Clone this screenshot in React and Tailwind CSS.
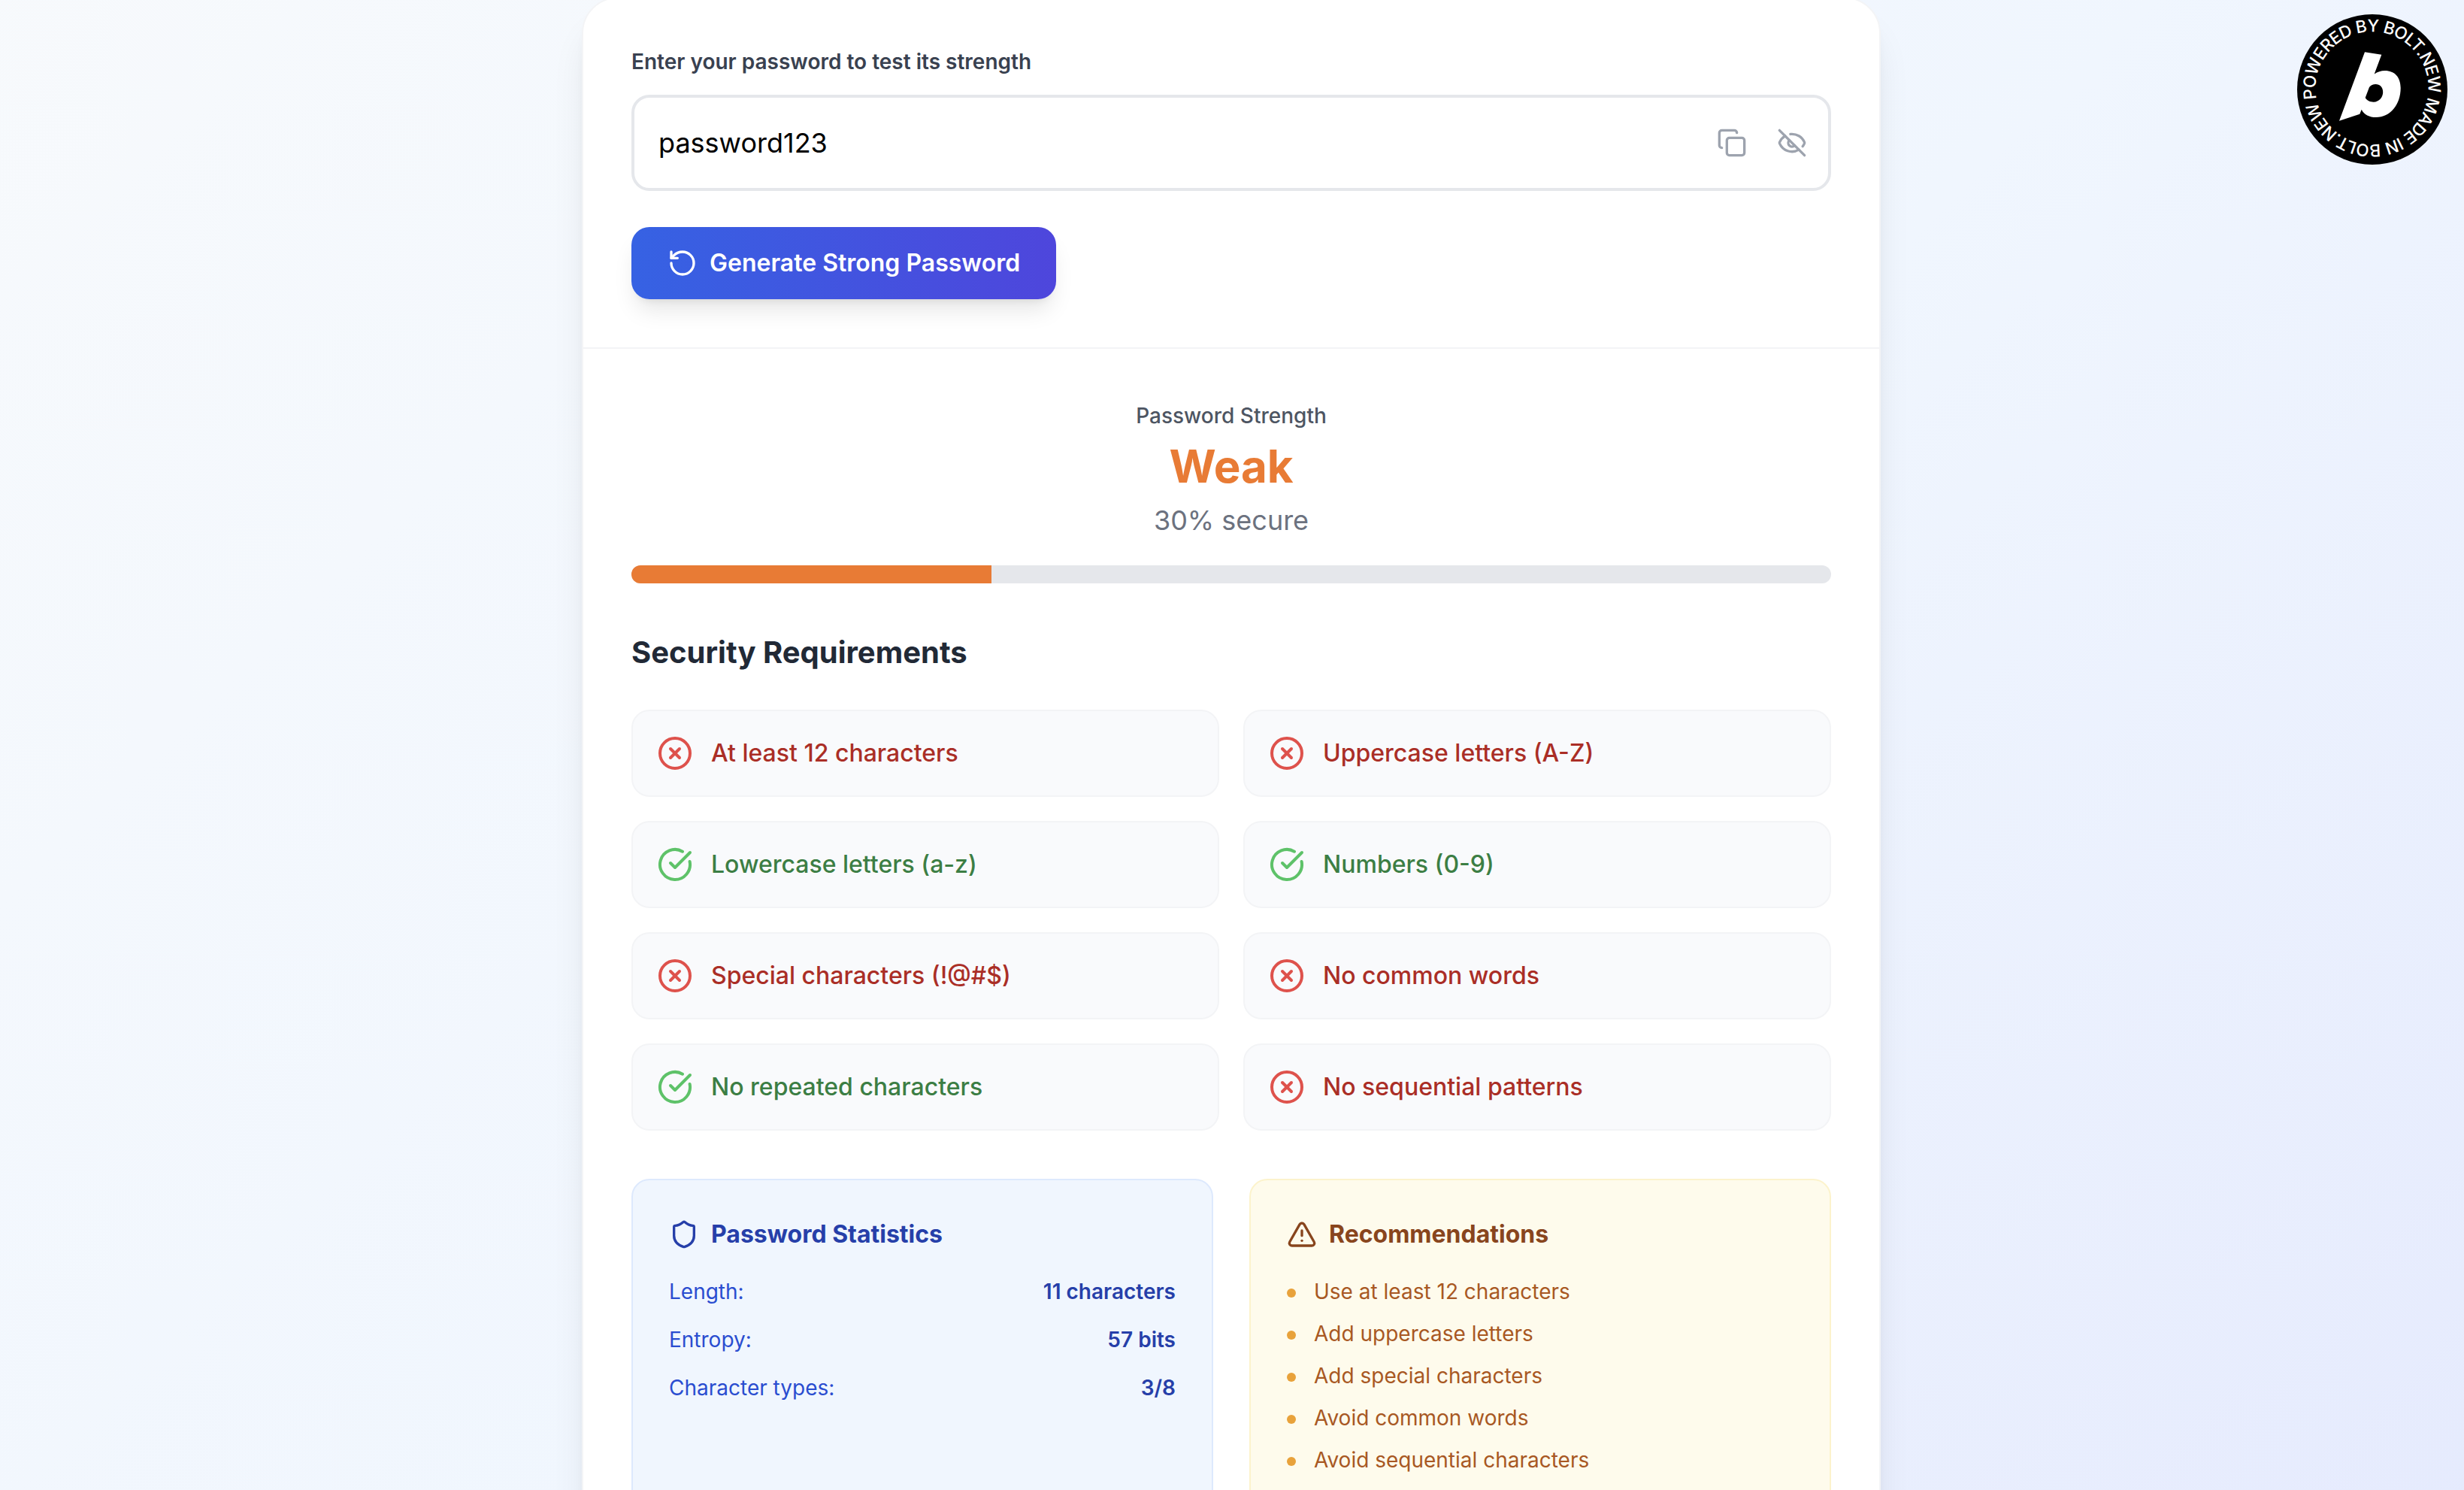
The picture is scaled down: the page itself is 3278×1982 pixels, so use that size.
import { AlertTriangle, CheckCircle, Copy, EyeOff, RotateCcw, Shield, XCircle } from 'lucide-react'

const requirements = [
  { label: 'At least 12 characters', met: false },
  { label: 'Uppercase letters (A-Z)', met: false },
  { label: 'Lowercase letters (a-z)', met: true },
  { label: 'Numbers (0-9)', met: true },
  { label: 'Special characters (!@#$)', met: false },
  { label: 'No common words', met: false },
  { label: 'No repeated characters', met: true },
  { label: 'No sequential patterns', met: false },
]

const stats = [
  { label: 'Length:', value: '11 characters' },
  { label: 'Entropy:', value: '57 bits' },
  { label: 'Character types:', value: '3/8' },
]

const recommendations = [
  'Use at least 12 characters',
  'Add uppercase letters',
  'Add special characters',
  'Avoid common words',
  'Avoid sequential characters',
]

function BoltBadge() {
  return (
    <svg viewBox="0 0 200 200" className="absolute top-[19px] right-[22px] size-[200px]">
      <circle cx="100" cy="100" r="100" fill="#000" />
      <path id="badge-ring" d="M25.900 112.400 A75 75 0 1 1 26.100 113.400" fill="none" />
      <text fill="#fff" fontSize="22.5" fontWeight="500" fontFamily="Inter, sans-serif">
        <textPath href="#badge-ring" textLength="467" lengthAdjust="spacing">
          POWERED BY BOLT.NEW MADE IN BOLT.NEW
        </textPath>
      </text>
      <path
        fill="#fff"
        fillRule="evenodd"
        d="M90 50.3 L112.3 53.7 L102.7 79.5 C107 76.5 111.5 75 116.7 75 C130 75 137.7 84 137.7 98 C137.7 120 124 137 105 137 C96 137 89 133.5 85.7 126.7 L83.3 132.7 L56 141.7 Z M90.7 111 C93 115 97 116.7 101.7 116.7 C109 116.7 114.2 110.5 114.2 103.5 C114.2 97 110 93 104.5 93 C101 93 98 94.5 96 97 Z"
      />
    </svg>
  )
}

function Requirement({ label, met }) {
  return (
    <div className="flex items-center gap-6 rounded-3xl border-2 border-[#f3f4f6] bg-[#f9fafc] p-8">
      {met ? (
        <CheckCircle className="size-12 text-[#5ec269]" />
      ) : (
        <XCircle className="size-12 text-[#de524c]" />
      )}
      <span className={met ? 'font-medium text-[#3c7e44]' : 'font-medium text-[#aa2e26]'}>
        {label}
      </span>
    </div>
  )
}

export default function App() {
  const score = 30

  return (
    <div className="relative h-[1982px] overflow-hidden bg-[linear-gradient(to_bottom_right,#f8fafc,#f0f6fe,#e2e7fd)] bg-[length:3278px_3200px] bg-[position:0_-400px] font-['Inter',sans-serif] text-[32px] leading-[48px]">
      <div className="w-[3276px]">
        <main className="mx-auto -mt-1 w-[1728px] rounded-[48px] border-2 border-[#f3f4f6] bg-white shadow-[0_40px_50px_-10px_rgba(0,0,0,0.1),0_16px_20px_-12px_rgba(0,0,0,0.1)]">
          <section className="border-b-2 border-[#f3f4f6] p-16">
            <label className="mb-6 block text-[28px] leading-10 font-semibold text-[#394150]">
              Enter your password to test its strength
            </label>
            <div className="flex h-32 items-center justify-between rounded-3xl border-4 border-[#e5e7eb] pr-7 pl-8">
              <span className="text-[36px] leading-[56px] text-black">password123</span>
              <div className="flex gap-10 text-[#9da3ae]">
                <Copy className="size-10" />
                <EyeOff className="size-10" />
              </div>
            </div>
            <button className="mt-12 flex items-center gap-4 rounded-3xl bg-[linear-gradient(to_right,#3662e3,#4e46dc)] px-12 py-6 font-semibold text-white shadow-[0_20px_30px_-6px_rgba(0,0,0,0.1),0_8px_12px_-8px_rgba(0,0,0,0.1)]">
              <RotateCcw className="size-10" />
              Generate Strong Password
            </button>
          </section>

          <section className="p-16">
            <div className="mb-8 text-center">
              <div className="mb-2">
                <span className="text-[28px] leading-10 font-medium text-[#4d5562]">
                  Password Strength
                </span>
              </div>
              <div className="text-[60px] leading-[72px] font-bold text-[#e87b35]">Weak</div>
              <div className="mt-2 text-[36px] leading-[56px] text-[#6c727f]">{score}% secure</div>
            </div>
            <div className="h-6 overflow-hidden rounded-full bg-[#e5e7eb]">
              <div className="h-full bg-[#e87b35]" style={{ width: `${score}%` }} />
            </div>

            <h3 className="mt-16 mb-12 text-[40px] leading-[56px] font-bold text-[#212936]">
              Security Requirements
            </h3>
            <div className="grid grid-cols-2 gap-8">
              {requirements.map((r) => (
                <Requirement key={r.label} label={r.label} met={r.met} />
              ))}
            </div>

            <div className="mt-16 grid grid-cols-2 gap-12">
              <div className="rounded-3xl border-2 border-[#dde9fd] bg-[#f0f6fe] p-12">
                <h4 className="mb-8 flex items-center gap-4 font-bold text-[#263fa9]">
                  <Shield className="size-10" />
                  Password Statistics
                </h4>
                <div className="space-y-6 text-[28px] leading-10">
                  {stats.map((s) => (
                    <div key={s.label} className="flex justify-between">
                      <span className="text-[#2a4dd0]">{s.label}</span>
                      <span className="font-semibold text-[#263fa9]">{s.value}</span>
                    </div>
                  ))}
                </div>
              </div>

              <div className="rounded-3xl border-2 border-[#fcf3cc] bg-[#fefbec] p-12">
                <h4 className="mb-8 flex items-center gap-4 font-bold text-[#88451d]">
                  <AlertTriangle className="size-10" />
                  Recommendations
                </h4>
                <ul className="space-y-4 text-[28px] leading-10 text-[#a85823]">
                  {recommendations.map((tip) => (
                    <li key={tip} className="flex items-start gap-6">
                      <span className="mt-4 size-3 rounded-full bg-[#e8a23b]" />
                      {tip}
                    </li>
                  ))}
                </ul>
              </div>
            </div>
          </section>
        </main>
      </div>
      <BoltBadge />
    </div>
  )
}
